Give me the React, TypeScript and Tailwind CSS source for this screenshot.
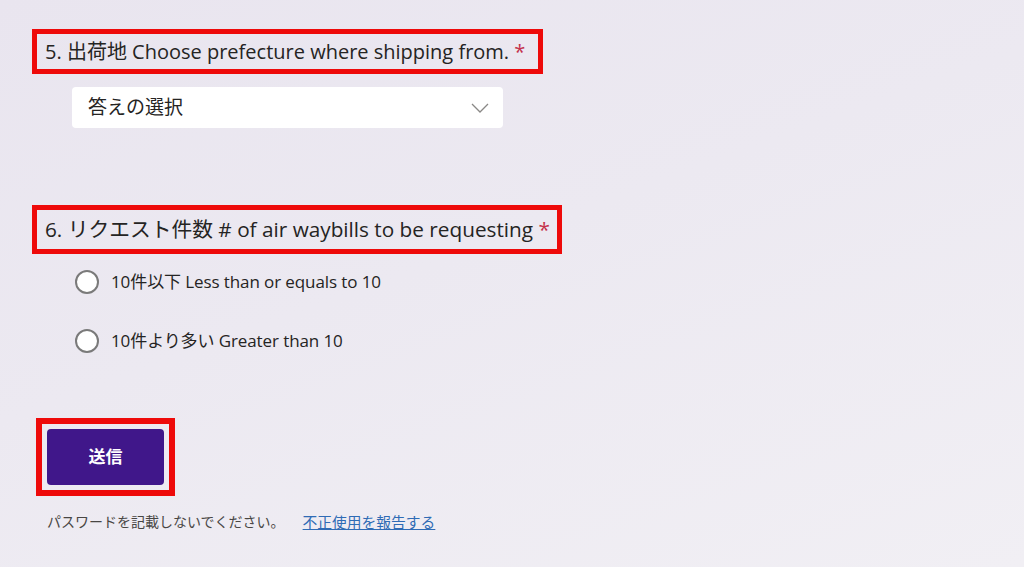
import React from "react";

const font = { fontFamily: '"Open Sans", "Noto Sans CJK JP", sans-serif' };

function Radio({ label }: { label: string }) {
  return (
    <label className="flex items-center gap-[12px] h-[24px]">
      <span className="w-[24px] h-[24px] rounded-full border-2 border-[#7a7a7a] bg-white shrink-0" />
      <span className="text-[17px] text-[#252423] tracking-[-0.1px]">{label}</span>
    </label>
  );
}

export default function App() {
  return (
    <div
      className="w-[1024px] h-[567px] overflow-hidden bg-[linear-gradient(160deg,#e9e5ef_0%,#ece9f1_45%,#f1eff4_100%)] relative"
      style={font}
    >
      <div className="pl-[32px] pt-[29px] flex flex-col items-start">
        <div className="border-[5px] border-[#ee0a0a] h-[45px] w-[511px] flex items-center pl-[8px]">
          <span className="text-[20px] text-[#252423] whitespace-nowrap">
            5. 出荷地 Choose prefecture where shipping from. <span className="text-[#c4314b]">*</span>
          </span>
        </div>
        <div className="ml-[40px] mt-[13px] w-[431px] h-[41px] bg-white rounded-[4px] flex items-center justify-between pl-[16px] pr-[14px]">
          <span className="text-[19px] text-[#252423]">答えの選択</span>
          <svg width="18" height="10" viewBox="0 0 18 10" fill="none">
            <path d="M1 1 L9 9 L17 1" stroke="#8a8886" strokeWidth="1.3" />
          </svg>
        </div>

        <div className="mt-[77px] border-[5px] border-[#ee0a0a] h-[49px] w-[530px] flex items-center pl-[8px]">
          <span className="text-[20.75px] text-[#252423] whitespace-nowrap">
            6. リクエスト件数 # of air waybills to be requesting <span className="text-[#c4314b]">*</span>
          </span>
        </div>

        <div className="ml-[43px] mt-[16px] flex flex-col gap-[35px]">
          <Radio label="10件以下 Less than or equals to 10" />
          <Radio label="10件より多い Greater than 10" />
        </div>

        <div className="ml-[4px] mt-[65px] border-[6px] border-[#ee0a0a] w-[139px] h-[78px] p-[5px]">
          <button className="w-full h-full bg-[#40178a] rounded-[4px] text-white text-[17px] font-bold">
            送信
          </button>
        </div>

        <div className="ml-[15px] mt-[15px] text-[14px] text-[#484644] flex gap-[18px]">
          <span>パスワードを記載しないでください。</span>
          <a className="text-[#2f6bb5] underline text-[14.75px]">不正使用を報告する</a>
        </div>
      </div>
    </div>
  );
}
